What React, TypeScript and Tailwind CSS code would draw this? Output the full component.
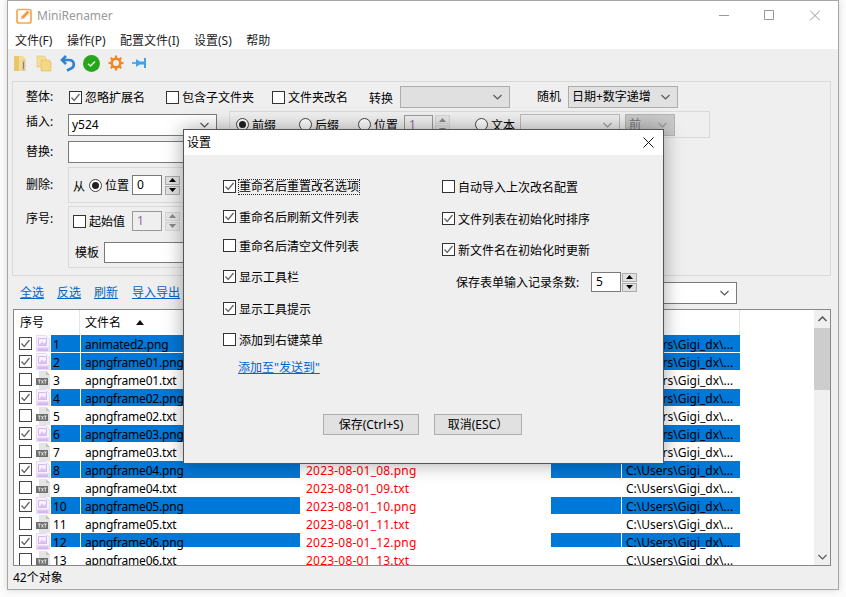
import type { ReactNode } from "react";

const FILES = Array.from({ length: 13 }, (_, i) => {
  const n = i + 1;
  const png = n <= 2 || n % 2 === 0;
  const frame = String(Math.floor(n / 2) || 1).padStart(2, "0");
  const name = n === 1 ? "animated2.png" : `apngframe${n === 2 ? "01" : frame}.${png ? "png" : "txt"}`;
  return {
    n,
    png,
    name,
    newName: `2023-08-01_${String(n).padStart(2, "0")}.${png ? "png" : "txt"}`,
  };
});

const LEFT_OPTIONS = [
  { label: "重命名后刷新文件列表", checked: true, cls: "mt-[13px]" },
  { label: "重命名后清空文件列表", checked: false, cls: "mt-[12px]" },
  { label: "显示工具栏", checked: true, cls: "mt-[14px]" },
  { label: "显示工具提示", checked: true, cls: "mt-[15px]" },
  { label: "添加到右键菜单", checked: false, cls: "mt-[14px]" },
];

function Box({ checked, soft }: { checked?: boolean; soft?: boolean }) {
  return (
    <span className={`flex h-[13px] w-[13px] shrink-0 items-center justify-center border bg-white ${soft ? "border-[#444]" : "border-[#333]"}`}>
      {checked && (
        <svg width="11" height="11" viewBox="0 0 11 11" fill="none" stroke="#666" strokeWidth="1.3">
          <path d="M1.5 5.5 4.2 8.5 9.5 2" />
        </svg>
      )}
    </span>
  );
}

function Check({ label, checked, cls = "" }: { label: string; checked?: boolean; cls?: string }) {
  return (
    <span className={`flex h-[17px] items-center gap-[3px] ${cls}`}>
      <Box checked={checked} />
      <span className="mt-[2px]">{label}</span>
    </span>
  );
}

function Radio({ label, on, cls = "" }: { label: string; on?: boolean; cls?: string }) {
  return (
    <span className={`flex items-center gap-[3px] ${cls}`}>
      <span className="flex h-[13px] w-[13px] shrink-0 items-center justify-center rounded-full border border-[#444] bg-white">
        {on && <span className="h-[7px] w-[7px] rounded-full bg-[#222]" />}
      </span>
      <span className="mt-[2px]">{label}</span>
    </span>
  );
}

function Chevron({ color = "#555" }: { color?: string }) {
  return (
    <svg width="9" height="6" viewBox="0 0 9 6" fill="none" stroke={color} strokeWidth="1.1" className="shrink-0">
      <path d="M.5 1 4.5 5 8.5 1" />
    </svg>
  );
}

function Combo({ text, cls, chevron }: { text?: ReactNode; cls: string; chevron?: string }) {
  return (
    <span className={`flex h-[22px] shrink-0 items-center justify-between border pl-[3px] pr-[7px] ${cls}`}>
      <span>{text}</span>
      <Chevron color={chevron} />
    </span>
  );
}

function Spin({ value, width, gap, disabled }: { value: string; width: string; gap: string; disabled?: boolean }) {
  const arrow = disabled ? "text-[#888]" : "text-black";
  const btn = `flex h-[9px] w-[15px] items-center justify-center border ${disabled ? "border-[#d4d4d4] bg-[#e6e6e6]" : "border-[#adadad] bg-[#e1e1e1]"}`;
  return (
    <span className={`flex items-center ${gap}`}>
      <span className={`flex h-[20px] items-center border pl-[4px] ${width} ${disabled ? "border-[#999] bg-[#efefef] text-[#8a6d9a]" : "border-[#7a7a7a] bg-white"}`}>{value}</span>
      <span className={`flex flex-col gap-[1px] ${arrow}`}>
        <span className={btn}>
          <svg width="7" height="4" viewBox="0 0 7 4" fill="currentColor"><path d="M3.5 0 7 4H0z" /></svg>
        </span>
        <span className={btn}>
          <svg width="7" height="4" viewBox="0 0 7 4" fill="currentColor"><path d="M0 0h7L3.5 4z" /></svg>
        </span>
      </span>
    </span>
  );
}

function AppIcon() {
  return (
    <svg width="16" height="16" viewBox="0 0 16 16" fill="none" className="shrink-0">
      <rect x="1" y="1.5" width="14" height="13.5" rx="2" stroke="#f6a652" strokeWidth="1.7" fill="#fff" />
      <path d="M4.5 11.5 5.2 8.6 11.4 2.2 13.8 4.5 7.6 10.9z" fill="#f29c3f" stroke="#fff" strokeWidth=".5" />
      <path d="M5.4 10.7 5.7 9.4 6.8 10.4z" fill="#fff" />
    </svg>
  );
}

function FolderZip() {
  return (
    <svg width="15" height="17" viewBox="0 0 15 17">
      <path d="M1 1h9l3 3v12H1z" fill="#f4dc97" />
      <path d="M1 1h5v15H1z" fill="#eac66a" />
      <path d="M9 5h3v11H9z" fill="#cfc8b4" />
      <path d="M10 7h1v7h-1z" fill="#8c8574" />
    </svg>
  );
}

function FolderCopy() {
  return (
    <svg width="17" height="17" viewBox="0 0 17 17">
      <path d="M1 1h7l2 2v9H1z" fill="#f6dd97" stroke="#e0c06c" strokeWidth=".6" />
      <path d="M5 5h8l2 2v9H5z" fill="#f5d785" stroke="#dcb861" strokeWidth=".6" />
    </svg>
  );
}

function Undo() {
  return (
    <svg width="16" height="17" viewBox="0 0 16 17" fill="none" stroke="#2f83d0" strokeWidth="2.6" className="shrink-0">
      <path d="M6 1 2 5l4 4" />
      <path d="M2.5 5H9c6 0 6 7 2 8.5L7 15.5" />
    </svg>
  );
}

function Ok() {
  return (
    <svg width="17" height="17" viewBox="0 0 17 17" fill="none">
      <circle cx="8.5" cy="8.5" r="8.5" fill="#27a51d" />
      <path d="M5 8.7 7.5 11l4.5-4.6" stroke="#d8f0d0" strokeWidth="1.5" />
    </svg>
  );
}

function Gear() {
  return (
    <svg width="16" height="16" viewBox="0 0 16 16" fill="none" stroke="#f5861f">
      <circle cx="8" cy="8" r="4.3" strokeWidth="2.6" />
      <path d="M8 .5v3M8 12.5v3M.5 8h3M12.5 8h3M2.7 2.7l2.1 2.1M11.2 11.2l2.1 2.1M13.3 2.7l-2.1 2.1M4.8 11.2l-2.1 2.1" strokeWidth="2.2" />
    </svg>
  );
}

function Pin() {
  return (
    <svg width="16" height="12" viewBox="0 0 16 12" fill="none">
      <path d="M0 6h8" stroke="#4aa8ee" strokeWidth="1.8" />
      <path d="M4 2l6 4-6 4z" fill="#3ea2ee" />
      <path d="M8 4.5h4V1h2v10h-2V7.5H8z" fill="#3ea2ee" />
    </svg>
  );
}

function PngIcon() {
  return (
    <svg width="14" height="18" viewBox="0 0 14 18" className="shrink-0">
      <path d="M0 0h10l4 4v13H0z" fill="#ead9f9" />
      <path d="M1 1h8.5L13 4.5V12H1z" fill="#f8f2fd" />
      <path d="M2.5 3.5h8v7h-8z" fill="none" stroke="#d3b8ef" />
      <path d="M3 10l3-3.5 2 2 1.5-1.5L11 10z" fill="#dcc3f4" />
      <path d="M2 13.5h10v2.5H2z" fill="#d3b9ef" />
    </svg>
  );
}

function TxtIcon() {
  return (
    <svg width="14" height="18" viewBox="0 0 14 18" className="shrink-0">
      <path d="M3 0h7l4 4v14H3z" fill="#e4e4e4" />
      <path d="M10 0l4 4h-4z" fill="#c4c4c4" />
      <path d="M0 7h12v7H0z" fill="#6f6f6f" />
      <path d="M2 9h2.6M3.3 9v3.5M5.4 9l2 3.5M7.4 9l-2 3.5M8 9h2.6M9.3 9v3.5" stroke="#f4f4f4" strokeWidth=".8" fill="none" />
    </svg>
  );
}

function FileRow({ f }: { f: (typeof FILES)[number] }) {
  const sel = f.png;
  const blue = sel ? "bg-[#0078d7]" : "bg-white";
  // row 12 is cut short in the screenshot, its text hangs over the gap
  const h = f.n === 12 ? "h-[14px]" : "h-[17px]";
  const gap = f.n === 12 ? "mb-[4px]" : "mb-[1px]";
  return (
    <div className={`flex shrink-0 text-black ${h} ${gap}`}>
      <div className="flex w-[37px] shrink-0 items-start">
        <span className="ml-[5px] mr-[4px] mt-[2px]"><Box checked={sel} soft /></span>
        {f.png ? <PngIcon /> : <TxtIcon />}
      </div>
      <div className={`w-[29px] shrink-0 pl-[2px] leading-[19px] ${blue}`}>{f.n}</div>
      <div className={`ml-[1px] w-[219px] shrink-0 pl-[4px] leading-[19px] tracking-[-0.2px] ${blue}`}>{f.name}</div>
      <div className="ml-[1px] w-[249px] shrink-0 pl-[5px] leading-[19px] tracking-[0.2px] text-[#ff0000]">{f.newName}</div>
      <div className={`ml-[1px] w-[70px] shrink-0 ${blue}`} />
      <div className={`ml-[1px] w-[118px] shrink-0 pl-[4px] leading-[19px] ${blue}`}>C:\Users\Gigi_dx\...</div>
    </div>
  );
}

function SettingsDialog() {
  return (
    <div className="absolute left-[183px] top-[129px] flex h-[335px] w-[481px] flex-col border border-[#555] bg-[#efefef] shadow-[0_0_18px_rgba(0,0,0,0.35)]">
      <div className="flex h-[25px] shrink-0 items-center justify-between bg-white pl-[3px] pr-[9px]">
        <span>设置</span>
        <svg width="11" height="11" viewBox="0 0 11 11" stroke="#111" strokeWidth="1"><path d="M.5.5l10 10M10.5.5l-10 10" /></svg>
      </div>
      <div className="flex pl-[39px] pt-[23px]">
        <div className="w-[219px]">
          <span className="flex h-[17px] items-center gap-[2px]">
            <Box checked />
            <span className="mt-[1px] border border-dotted border-[#222] leading-[14px]">重命名后重置改名选项</span>
          </span>
          {LEFT_OPTIONS.map((o) => (
            <Check key={o.label} label={o.label} checked={o.checked} cls={o.cls} />
          ))}
          <a className="ml-[15px] mt-[12px] block leading-[16px] text-[#0066cc] underline">添加至"发送到"</a>
        </div>
        <div>
          <Check label="自动导入上次改名配置" />
          <Check label="文件列表在初始化时排序" checked cls="mt-[15px]" />
          <Check label="新文件名在初始化时更新" checked cls="mt-[14px]" />
          <div className="ml-[14px] mt-[14px] flex items-center">
            <span className="mt-[2px] w-[135px]">保存表单输入记录条数:</span>
            <Spin value="5" width="w-[30px]" gap="gap-[1px]" />
          </div>
        </div>
      </div>
      <div className="ml-[139px] mt-[38px] flex gap-[15px]">
        <button className="h-[21px] w-[96px] border border-[#adadad] bg-[#e1e1e1]">保存(Ctrl+S)</button>
        <button className="h-[21px] w-[88px] border border-[#adadad] bg-[#e1e1e1]">取消(ESC）</button>
      </div>
    </div>
  );
}

export default function App() {
  return (
    <div className="relative h-[597px] w-[846px] overflow-hidden bg-[#fbfbfb] font-['Noto_Sans','Noto_Sans_CJK_SC',sans-serif] text-[12px] leading-[18px] text-black">
      <div className="ml-[7px] flex h-[590px] w-[832px] flex-col border border-[#a6a6a6] bg-[#efefef] shadow-[0_0_6px_rgba(0,0,0,0.15)]">
        <div className="h-[48px] shrink-0 bg-white">
          <div className="flex h-[29px] items-center pl-[8px]">
            <AppIcon />
            <span className="ml-[5px] text-[12px] text-[#999]">MiniRenamer</span>
            <svg className="ml-auto mr-[18px]" width="101" height="11" viewBox="0 0 101 11" fill="none" stroke="#999">
              <path d="M0 5.5h10M45.5.5h9v9h-9zM91 .5l10 10M101 .5l-10 10" />
            </svg>
          </div>
          <div className="flex h-[19px] items-center gap-[14.6px] pl-[7px] pt-[3px] text-[#222]">
            <span>文件(F)</span>
            <span>操作(P)</span>
            <span>配置文件(I)</span>
            <span>设置(S)</span>
            <span>帮助</span>
          </div>
        </div>

        <div className="flex h-[32px] shrink-0 items-center gap-[5px] pb-[4px] pl-[5px]">
          <span className="mr-[3px]"><FolderZip /></span>
          <span className="mr-[2px]"><FolderCopy /></span>
          <Undo />
          <span className="ml-[2px]"><Ok /></span>
          <span className="ml-[3px]"><Gear /></span>
          <span className="ml-[3px]"><Pin /></span>
        </div>

        <div className="mx-[4px] h-[195px] w-[819px] shrink-0 border border-[#d9d9d9] pl-[13px] pt-[4px]">
          <div className="flex h-[22px] items-center">
            <span className="w-[43px]">整体:</span>
            <Check label="忽略扩展名" checked cls="w-[97px]" />
            <Check label="包含子文件夹" cls="w-[106px]" />
            <Check label="文件夹改名" cls="w-[97px]" />
            <span className="mt-[3px] w-[31px]">转换</span>
            <Combo cls="w-[110px] border-[#adadad] bg-[#e0e0e0]" />
            <span className="ml-[27px] w-[31px]">随机</span>
            <Combo text="日期+数字递增" cls="w-[110px] border-[#adadad] bg-[#e1e1e1]" />
          </div>

          <div className="mt-[3px] flex h-[27px] items-center">
            <span className="-mt-[6px] w-[42px]">插入:</span>
            <Combo text="y524" cls="w-[149px] border-[#7a7a7a] bg-white" />
            <div className="ml-[12px] flex h-[27px] w-[481px] items-center border border-[#d9d9d9] pl-[6px]">
              <Radio label="前缀" on cls="w-[63px]" />
              <Radio label="后缀" cls="w-[59px]" />
              <Radio label="位置" cls="w-[46px]" />
              <Spin value="1" width="w-[29px]" gap="gap-[2px]" disabled />
              <Radio label="文本" cls="ml-[25px] w-[45px]" />
              <Combo cls="w-[100px] border-[#bbb] bg-[#ededed]" chevron="#999" />
              <Combo text="前" cls="ml-[5px] w-[50px] border-[#b5b5b5] bg-[#c9c9c9] text-[#777]" chevron="#999" />
            </div>
          </div>

          <div className="mt-[3px] flex h-[22px] items-center">
            <span className="w-[42px]">替换:</span>
            <span className="h-[22px] w-[300px] border border-[#7a7a7a] bg-white" />
          </div>

          <div className="mt-[4px] flex">
            <span className="mt-[9px] w-[42px]">删除:</span>
            <div className="flex h-[36px] w-[300px] items-center border border-[#d9d9d9] pl-[4px]">
              <span className="mt-[3px] w-[16px]">从</span>
              <Radio label="位置" on cls="w-[43px]" />
              <Spin value="0" width="w-[30px]" gap="gap-[3px]" />
            </div>
          </div>

          <div className="mt-[3px] flex">
            <span className="mt-[4px] w-[42px]">序号:</span>
            <div className="h-[62px] w-[300px] border border-[#d9d9d9] pl-[4px]">
              <div className="mt-[4px] flex items-center">
                <Check label="起始值" cls="w-[59px]" />
                <Spin value="1" width="w-[30px]" gap="gap-[3px]" disabled />
              </div>
              <div className="mt-[11px] flex items-center pl-[2px]">
                <span className="w-[29px]">模板</span>
                <span className="h-[21px] w-[200px] border border-[#7a7a7a] bg-white" />
              </div>
            </div>
          </div>
        </div>

        <div className="flex h-[33px] shrink-0 items-center gap-[13px] pl-[12px] pr-[101px] text-[#0066cc] underline">
          <a>全选</a>
          <a>反选</a>
          <a>刷新</a>
          <a className="ml-[1px]">导入导出</a>
          <span className="ml-auto text-black no-underline"><Combo cls="w-[300px] border-[#7a7a7a] bg-white" chevron="#555" /></span>
        </div>

        <div className="mx-[5px] flex h-[257px] w-[818px] shrink-0 border border-[#888] bg-white">
          <div className="flex h-full w-[800px] flex-col overflow-hidden">
            <div className="flex h-[25px] shrink-0 items-center">
              <span className="w-[66px] border-r border-[#e5e5e5] pl-[6px] leading-[25px]">序号</span>
              <span className="flex w-[221px] items-center gap-[15px] border-r border-[#e5e5e5] pl-[5px] leading-[25px]">
                文件名
                <svg width="8" height="5" viewBox="0 0 8 5"><path d="M4 0l4 5H0z" fill="#111" /></svg>
              </span>
              <span className="h-[25px] w-[250px] border-r border-[#e5e5e5]" />
              <span className="h-[25px] w-[71px] border-r border-[#e5e5e5]" />
              <span className="h-[25px] w-[118px] border-r border-[#e5e5e5]" />
            </div>
            {FILES.map((f) => (
              <FileRow key={f.n} f={f} />
            ))}
          </div>
          <div className="flex w-[16px] shrink-0 flex-col items-center bg-[#f0f0f0]">
            <span className="flex h-[18px] shrink-0 items-center"><svg width="9" height="6" viewBox="0 0 9 6" fill="none" stroke="#555" strokeWidth="1.5"><path d="M.5 5 4.5 1l4 4" /></svg></span>
            <span className="h-[62px] w-full bg-[#cdcdcd]" />
            <span className="mt-auto flex h-[17px] items-center"><Chevron /></span>
          </div>
        </div>

        <div className="flex h-[23px] shrink-0 items-center pl-[5px]">42个对象</div>
      </div>
      <SettingsDialog />
    </div>
  );
}
